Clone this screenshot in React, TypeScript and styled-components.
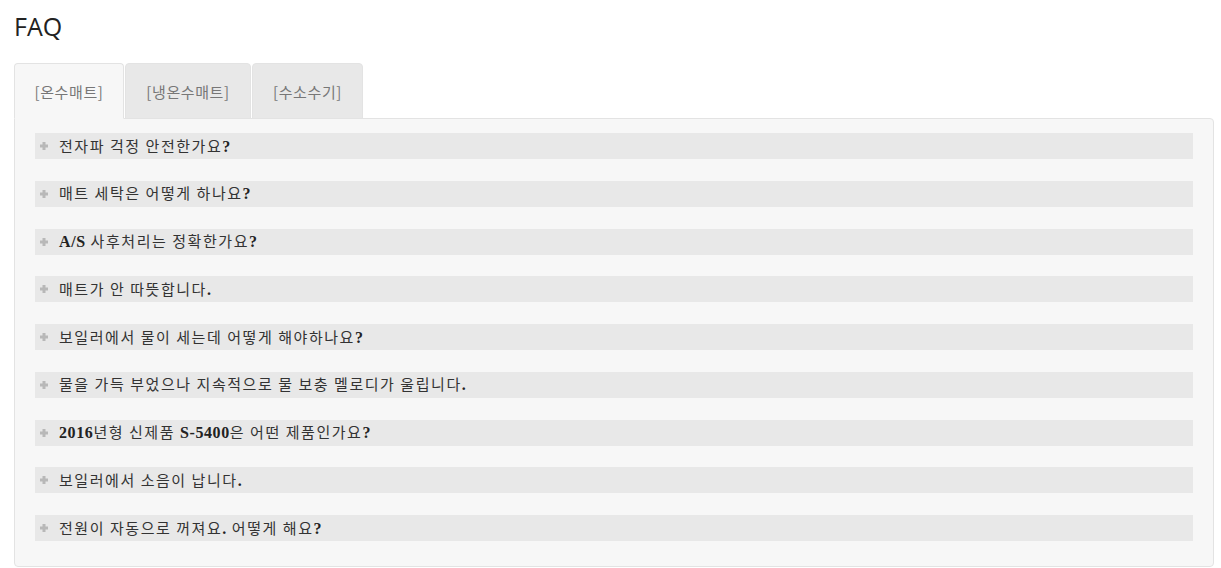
import React, { useState } from 'react';
import styled, { createGlobalStyle } from 'styled-components';

const GlobalStyle = createGlobalStyle`
    body {
        margin: 0;
        background: #ffffff;
        font-family: "Open Sans", "Noto Sans CJK KR", sans-serif;
        color: #333333;
    }
`;

const tabs = [
    { label: '[온수매트]', width: 110 },
    { label: '[냉온수매트]', width: 126 },
    { label: '[수소수기]', width: 111 },
];

const questions = [
    '전자파 걱정 안전한가요?',
    '매트 세탁은 어떻게 하나요?',
    'A/S 사후처리는 정확한가요?',
    '매트가 안 따뜻합니다.',
    '보일러에서 물이 세는데 어떻게 해야하나요?',
    '물을 가득 부었으나 지속적으로 물 보충 멜로디가 울립니다.',
    '2016년형 신제품 S-5400은 어떤 제품인가요?',
    '보일러에서 소음이 납니다.',
    '전원이 자동으로 꺼져요. 어떻게 해요?',
];

// latin runs are shown in a bold serif, hangul stays regular
const renderQuestion = (text: string) =>
    text.split(/([A-Za-z0-9?.\/\-]+)/).map((part, i) =>
        /[A-Za-z0-9?.\/\-]/.test(part) ? <SLatin key={i}>{part}</SLatin> : <span key={i}>{part}</span>
    );

const PlusIcon = () => (
    <svg width='8' height='8' viewBox='0 0 8 8'>
        <path d='M2.5 0h3v2.5H8v3H5.5V8h-3V5.5H0v-3h2.5z' fill='#b8b8b8' />
    </svg>
);

const App: React.FC = () => {
    const [active, setActive] = useState<number>(0);

    return (
        <SPage>
            <GlobalStyle />
            <STitle>FAQ</STitle>
            <STabs>
                {tabs.map((tab, i) => (
                    <STab key={tab.label} $active={i === active} $width={tab.width} onClick={() => setActive(i)}>
                        {tab.label}
                    </STab>
                ))}
            </STabs>
            <SPanel>
                {questions.map(q => (
                    <SQuestion key={q}>
                        <PlusIcon />
                        <SText>{renderQuestion(q)}</SText>
                    </SQuestion>
                ))}
            </SPanel>
        </SPage>
    );
};

export default App;

const SPage = styled.div`
    padding: 0 7px 0 14px;
`;

const STitle = styled.h1`
    margin: 0;
    padding-top: 8px;
    height: 63px;
    box-sizing: border-box;
    font-family: "Open Sans", sans-serif;
    font-weight: 400;
    font-size: 25px;
    line-height: 36px;
    color: #222222;
`;

const STabs = styled.div`
    display: flex;
    gap: 1px;
    position: relative;
    z-index: 1;
`;

const STab = styled.div<{ $active: boolean; $width: number }>`
    width: ${p => p.$width}px;
    height: 56px;
    box-sizing: border-box;
    display: flex;
    align-items: center;
    justify-content: center;
    font-family: "Noto Sans CJK KR", sans-serif;
    font-size: 15px;
    letter-spacing: 0.6px;
    color: #777777;
    background: ${p => (p.$active ? '#f7f7f7' : '#e8e8e8')};
    border: 1px solid #e3e3e3;
    border-bottom-color: ${p => (p.$active ? '#f7f7f7' : '#e3e3e3')};
    border-radius: 4px 4px 0 0;
    cursor: pointer;
`;

const SPanel = styled.div`
    margin-top: -1px;
    background: #f7f7f7;
    border: 1px solid #e3e3e3;
    border-radius: 0 4px 4px 4px;
    padding: 14px 20px 25px 20px;
    display: flex;
    flex-direction: column;
    gap: 21.75px;
`;

const SQuestion = styled.div`
    height: 26px;
    background: #e8e8e8;
    display: flex;
    align-items: center;
    gap: 11px;
    padding-left: 5px;
`;

const SText = styled.div`
    font-family: "Noto Sans CJK KR", sans-serif;
    font-size: 15px;
    letter-spacing: 1.55px;
    color: #333333;
    line-height: 26px;
`;

const SLatin = styled.span`
    font-family: "Liberation Serif", serif;
    font-weight: 700;
    font-size: 16px;
    letter-spacing: 0.6px;
    color: #222222;
`;
